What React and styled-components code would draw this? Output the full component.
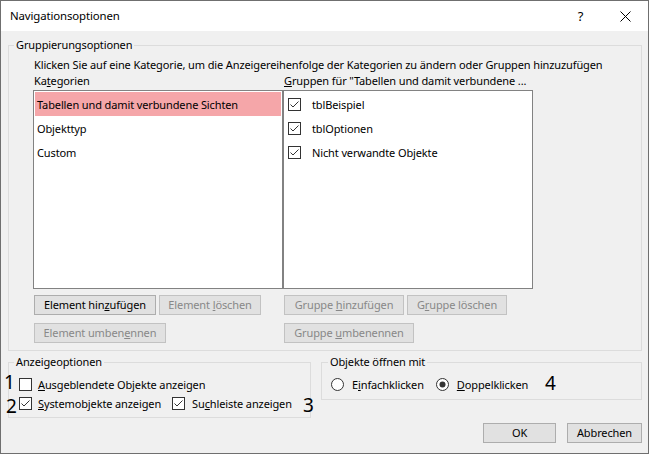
import styled, { createGlobalStyle } from "styled-components";

const GlobalStyle = createGlobalStyle`
  html, body {
    margin: 0;
    padding: 0;
    background: #fff;
  }
  body {
    font-family: "Noto Sans", "Liberation Sans", sans-serif;
    font-size: 11px;
    letter-spacing: -0.12px;
    color: #000;
  }
`;

const Window = styled.div`
  position: relative;
  width: 649px;
  height: 454px;
  box-sizing: border-box;
  border: 1px solid #6f6f6f;
  background: #f0f0f0;
  display: flex;
  flex-direction: column;
  overflow: hidden;
`;

const TitleBar = styled.div`
  height: 30px;
  background: #fff;
  display: flex;
  align-items: center;
  padding-left: 9px;
`;

const TitleText = styled.div`
  flex: 1;
  line-height: 16px;
  font-size: 11.4px;
`;

const CaptionButton = styled.div`
  width: 45px;
  height: 30px;
  display: flex;
  align-items: center;
  justify-content: center;
  font-size: 13px;
`;

const Body = styled.div`
  flex: 1;
  padding: 6px 6px 0 7px;
  display: flex;
  flex-direction: column;
`;

const Group = styled.fieldset`
  margin: 0;
  min-width: 0;
  box-sizing: border-box;
  border: 1px solid #dcdcdc;
  padding: ${(p) => p.$pad};
  width: ${(p) => (p.$width ? `${p.$width}px` : "auto")};
`;

const Legend = styled.legend`
  padding: 0 2px;
  margin-left: ${(p) => p.$offset}px;
  line-height: 16px;
`;

const Instruction = styled.div`
  line-height: 16px;
  padding-left: 1px;
  white-space: nowrap;
`;

const ListsGrid = styled.div`
  display: grid;
  grid-template-columns: 250px 250px;
`;

const ColumnHeader = styled.div`
  line-height: 16px;
  padding-left: 1px;
  margin-bottom: 1px;
  white-space: nowrap;
`;

const ListBox = styled.div`
  height: 199px;
  box-sizing: border-box;
  border: 1px solid #828282;
  background: #fff;
  padding: 1px;
`;

const ListItem = styled.div`
  height: 24px;
  display: flex;
  align-items: center;
  gap: 11px;
  padding-left: ${(p) => (p.$check ? 3 : 2)}px;
  background: ${(p) => (p.$selected ? "#f5a6a9" : "transparent")};
  white-space: nowrap;
`;

const ButtonStack = styled.div`
  display: flex;
  flex-direction: column;
  gap: 8px;
  margin-top: 6px;
  padding-left: 1px;
`;

const ButtonRow = styled.div`
  display: flex;
  gap: 3px;
`;

const Button = styled.button`
  width: ${(p) => p.$w}px;
  height: 20px;
  box-sizing: border-box;
  padding: 0;
  border: 1px solid ${(p) => (p.disabled ? "#c2c2c2" : "#adadad")};
  background: #e1e1e1;
  color: ${(p) => (p.disabled ? "#888888" : "#000")};
  font: inherit;
  letter-spacing: inherit;
  line-height: 18px;
  text-align: center;
  white-space: nowrap;
`;

const BottomRow = styled.div`
  display: flex;
  align-items: flex-start;
  gap: 10px;
  margin-top: 3px;
`;

const OptionRow = styled.div`
  display: flex;
  align-items: center;
  height: 19px;
  gap: ${(p) => p.$gap}px;
`;

const OptionLabel = styled.label`
  display: flex;
  align-items: center;
  gap: ${(p) => p.$gap}px;
  white-space: nowrap;
`;

const Footer = styled.div`
  display: flex;
  justify-content: flex-end;
  gap: 11px;
  margin-top: 5px;
`;

const Key = styled.u`
  text-decoration: underline;
  text-underline-offset: 1px;
`;

const Marker = styled.span`
  position: absolute;
  left: ${(p) => p.$x}px;
  top: ${(p) => p.$y}px;
  font-size: 19px;
  line-height: 19px;
  letter-spacing: 0;
  color: #000;
`;

function CheckBox({ checked }) {
  return (
    <svg width="13" height="13" viewBox="0 0 13 13" style={{ flexShrink: 0 }}>
      <rect x="0.5" y="0.5" width="12" height="12" fill="#fff" stroke="#333" />
      {checked && (
        <polyline
          points="2.5,6.5 5,9 10.5,3.5"
          fill="none"
          stroke="#333"
          strokeWidth="1"
        />
      )}
    </svg>
  );
}

function Radio({ checked }) {
  return (
    <svg width="13" height="13" viewBox="0 0 13 13" style={{ flexShrink: 0 }}>
      <circle cx="6.5" cy="6.5" r="6" fill="#fff" stroke="#333" />
      {checked && <circle cx="6.5" cy="6.5" r="3" fill="#333" />}
    </svg>
  );
}

function CloseIcon() {
  return (
    <svg width="11" height="11" viewBox="0 0 11 11">
      <path d="M0.5 0.5 L10.5 10.5 M10.5 0.5 L0.5 10.5" stroke="#000" strokeWidth="1" />
    </svg>
  );
}

const categories = ["Tabellen und damit verbundene Sichten", "Objekttyp", "Custom"];
const groups = ["tblBeispiel", "tblOptionen", "Nicht verwandte Objekte"];

export default function App() {
  return (
    <>
      <GlobalStyle />
      <Window>
        <TitleBar>
          <TitleText>Navigationsoptionen</TitleText>
          <CaptionButton>?</CaptionButton>
          <CaptionButton>
            <CloseIcon />
          </CaptionButton>
        </TitleBar>
        <Body>
          <Group $pad="4px 0 7px 24px">
            <Legend $offset={-19}>Gruppierungsoptionen</Legend>
            <Instruction>
              Klicken Sie auf eine Kategorie, um die Anzeigereihenfolge der Kategorien zu ändern oder
              Gruppen hinzuzufügen
            </Instruction>
            <ListsGrid>
              <ColumnHeader>
                Ka<Key>t</Key>egorien
              </ColumnHeader>
              <ColumnHeader>
                <Key>G</Key>ruppen für "Tabellen und damit verbundene ...
              </ColumnHeader>
              <ListBox>
                {categories.map((c, i) => (
                  <ListItem key={c} $selected={i === 0}>
                    {c}
                  </ListItem>
                ))}
              </ListBox>
              <ListBox>
                {groups.map((g) => (
                  <ListItem key={g} $check>
                    <CheckBox checked />
                    {g}
                  </ListItem>
                ))}
              </ListBox>
              <ButtonStack>
                <ButtonRow>
                  <Button $w={122}>
                    Element hin<Key>z</Key>ufügen
                  </Button>
                  <Button $w={102} disabled>
                    Element <Key>l</Key>öschen
                  </Button>
                </ButtonRow>
                <ButtonRow>
                  <Button $w={132} disabled>
                    Element umben<Key>e</Key>nnen
                  </Button>
                </ButtonRow>
              </ButtonStack>
              <ButtonStack>
                <ButtonRow>
                  <Button $w={120} disabled>
                    Gruppe <Key>h</Key>inzufügen
                  </Button>
                  <Button $w={100} disabled>
                    G<Key>r</Key>uppe löschen
                  </Button>
                </ButtonRow>
                <ButtonRow>
                  <Button $w={130} disabled>
                    Gruppe <Key>u</Key>mbenennen
                  </Button>
                </ButtonRow>
              </ButtonStack>
            </ListsGrid>
          </Group>

          <BottomRow>
            <Group $width={303} $pad="5px 0 4px 10px">
              <Legend $offset={-5}>Anzeigeoptionen</Legend>
              <OptionRow $gap={11}>
                <OptionLabel $gap={6}>
                  <CheckBox />
                  <span>
                    <Key>A</Key>usgeblendete Objekte anzeigen
                  </span>
                </OptionLabel>
              </OptionRow>
              <OptionRow $gap={11}>
                <OptionLabel $gap={6}>
                  <CheckBox checked />
                  <span>
                    <Key>S</Key>ystemobjekte anzeigen
                  </span>
                </OptionLabel>
                <OptionLabel $gap={7}>
                  <CheckBox checked />
                  <span>
                    Su<Key>c</Key>hleiste anzeigen
                  </span>
                </OptionLabel>
              </OptionRow>
            </Group>
            <Group $width={321} $pad="5px 0 5px 9px">
              <Legend $offset={-3}>Objekte öffnen mit</Legend>
              <OptionRow $gap={12}>
                <OptionLabel $gap={8}>
                  <Radio />
                  <span>
                    E<Key>i</Key>nfachklicken
                  </span>
                </OptionLabel>
                <OptionLabel $gap={8}>
                  <Radio checked />
                  <span>
                    <Key>D</Key>oppelklicken
                  </span>
                </OptionLabel>
              </OptionRow>
            </Group>
          </BottomRow>

          <Footer>
            <Button $w={73}>OK</Button>
            <Button $w={75}>Abbrechen</Button>
          </Footer>
        </Body>

        <Marker $x={3} $y={372}>1</Marker>
        <Marker $x={5} $y={396}>2</Marker>
        <Marker $x={302} $y={395}>3</Marker>
        <Marker $x={544} $y={373}>4</Marker>
      </Window>
    </>
  );
}
